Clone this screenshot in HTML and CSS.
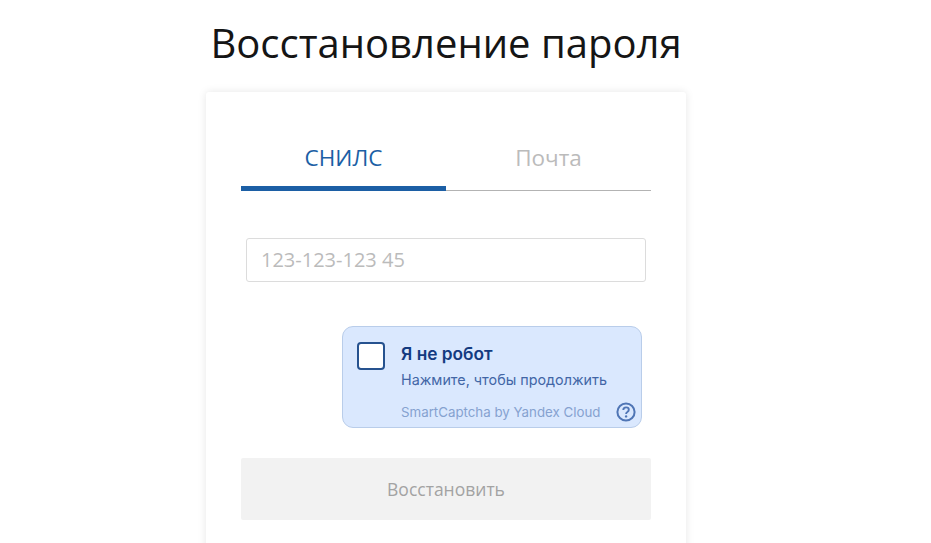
FILE: index.html
```html
<!DOCTYPE html>
<html lang="ru">

<head>
    <meta charset="UTF-8">
    <meta name="viewport" content="width=device-width, initial-scale=1.0">
    <title>Восстановление пароля</title>
    <link rel="stylesheet" href="styles.css">
</head>

<body>
    <div class="page">
        <h1 class="titulo">Восстановление пароля</h1>

        <form class="card">
            <!-- Abas -->
            <div class="tabs">
                <div class="tab tab-ativa">СНИЛС</div>
                <div class="tab">Почта</div>
            </div>

            <div class="campo">
                <input class="input" type="text" placeholder="123-123-123 45">
            </div>

            <!-- Captcha -->
            <div class="captcha-linha">
                <div class="captcha">
                    <div class="captcha-topo">
                        <span class="captcha-check"></span>
                        <div>
                            <p class="captcha-titulo">Я не робот</p>
                            <p class="captcha-texto">Нажмите, чтобы продолжить</p>
                        </div>
                    </div>
                    <div class="captcha-rodape">
                        <span>SmartCaptcha by Yandex Cloud</span>
                        <svg class="captcha-ajuda" width="20" height="20" viewBox="0 0 20 20" fill="none">
                            <circle cx="10" cy="10" r="8.6" stroke="#4f75b5" stroke-width="2" />
                            <path d="M7.3 8c0-1.6 1.2-2.6 2.8-2.6 1.5 0 2.7 1 2.7 2.3 0 1.1-.6 1.7-1.5 2.3-.8.5-1.2 1-1.2 1.9" stroke="#4f75b5" stroke-width="1.9" />
                            <circle cx="10.1" cy="14.4" r="1.2" fill="#4f75b5" />
                        </svg>
                    </div>
                </div>
            </div>

            <button class="botao" type="button" disabled>Восстановить</button>
        </form>
    </div>
</body>

</html>
```

FILE: styles.css
```css
html,
body {
    height: 100%;
    overflow: hidden;
}

body {
    margin: 0;
    font-family: 'Open Sans', sans-serif;
    background-color: #fff;
}

.page {
    width: 480px;
    margin-left: 206px;
}

.titulo {
    margin: 0;
    height: 92px;
    font-size: 40px;
    font-weight: 400;
    line-height: 86px;
    text-align: center;
    color: #151515;
    white-space: nowrap;
}

.card {
    padding: 35px 35px 40px;
    background: #fff;
    border-radius: 3px;
    box-shadow: 0 0 8px rgba(0, 0, 0, 0.1);
}

.tabs {
    display: flex;
    border-bottom: 1px solid #b3b3b3;
}

.tab {
    flex: 1;
    height: 63px;
    line-height: 62px;
    font-size: 22.5px;
    text-align: center;
    color: #bbb;
}

.tab-ativa {
    height: 59px;
    color: #1c5fa5;
    border-bottom: 5px solid #1c5fa5;
    margin-bottom: -1px;
}

.campo {
    padding: 47px 5px 0;
}

.input {
    display: block;
    box-sizing: border-box;
    width: 100%;
    height: 44px;
    padding: 0 14px 2px;
    border: 1px solid #dcdcdc;
    border-radius: 3px;
    outline: none;
    font-family: inherit;
    font-size: 20px;
}

.input::placeholder {
    color: #bbb;
    opacity: 1;
}

.captcha-linha {
    display: flex;
    justify-content: flex-end;
    padding: 44px 9px 0 0;
}

.captcha {
    box-sizing: border-box;
    width: 300px;
    height: 102px;
    padding: 15px 5px 0 14px;
    background-color: #dae8fe;
    border: 1px solid #b9cdea;
    border-radius: 11px;
    font-family: Inter, sans-serif;
}

.captcha-topo {
    display: flex;
    gap: 16px;
}

.captcha-check {
    box-sizing: border-box;
    flex: 0 0 auto;
    width: 28px;
    height: 28px;
    background-color: #fff;
    border: 2px solid #26528f;
    border-radius: 4px;
}

.captcha-titulo {
    margin: 0;
    padding-top: 2px;
    font-size: 17.3px;
    font-weight: 600;
    line-height: 20px;
    color: #133a80;
}

.captcha-texto {
    margin: 8px 0 0;
    font-size: 14.35px;
    line-height: 16px;
    color: #4266a6;
}

.captcha-rodape {
    display: flex;
    align-items: center;
    justify-content: space-between;
    margin-top: 14px;
    padding-left: 44px;
    font-size: 13.3px;
    color: #86a2d0;
}

.botao {
    display: block;
    width: 100%;
    height: 62px;
    margin-top: 30px;
    background-color: #f2f2f2;
    color: #a3a3a3;
    border: none;
    border-radius: 2px;
    font-family: inherit;
    font-size: 17.5px;
}
```
